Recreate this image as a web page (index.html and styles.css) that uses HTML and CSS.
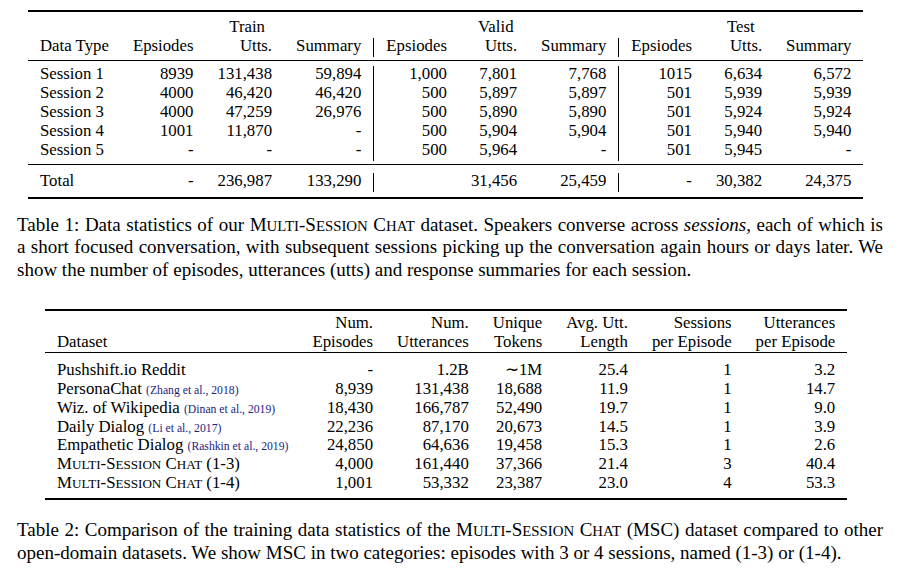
FILE: index.html
```html
<!DOCTYPE html>
<html>
<head>
<meta charset="utf-8">
<link rel="stylesheet" href="styles.css">
</head>
<body>
<div class="page">
  <table class="tab tab1">
    <tr class="rule thick"><td colspan="10"></td></tr>
    <tr class="gap g-t1"><td colspan="10"></td></tr>
    <tr>
      <td></td>
      <td colspan="3" class="c">Train</td>
      <td colspan="3" class="c">Valid</td>
      <td colspan="3" class="c">Test</td>
    </tr>
    <tr>
      <td class="l">Data Type</td>
      <td>Epsiodes</td><td>Utts.</td><td>Summary</td>
      <td class="bl">Epsiodes</td><td>Utts.</td><td>Summary</td>
      <td class="bl">Epsiodes</td><td>Utts.</td><td>Summary</td>
    </tr>
    <tr class="gap g-a"><td colspan="10"></td></tr>
    <tr class="rule"><td colspan="10"></td></tr>
    <tr class="gap g-b"><td colspan="10"></td></tr>
    <tr>
      <td class="l">Session 1</td>
      <td>8939</td><td>131,438</td><td>59,894</td>
      <td class="bl">1,000</td><td>7,801</td><td>7,768</td>
      <td class="bl">1015</td><td>6,634</td><td>6,572</td>
    </tr>
    <tr>
      <td class="l">Session 2</td>
      <td>4000</td><td>46,420</td><td>46,420</td>
      <td class="bl">500</td><td>5,897</td><td>5,897</td>
      <td class="bl">501</td><td>5,939</td><td>5,939</td>
    </tr>
    <tr>
      <td class="l">Session 3</td>
      <td>4000</td><td>47,259</td><td>26,976</td>
      <td class="bl">500</td><td>5,890</td><td>5,890</td>
      <td class="bl">501</td><td>5,924</td><td>5,924</td>
    </tr>
    <tr>
      <td class="l">Session 4</td>
      <td>1001</td><td>11,870</td><td>-</td>
      <td class="bl">500</td><td>5,904</td><td>5,904</td>
      <td class="bl">501</td><td>5,940</td><td>5,940</td>
    </tr>
    <tr>
      <td class="l">Session 5</td>
      <td>-</td><td>-</td><td>-</td>
      <td class="bl">500</td><td>5,964</td><td>-</td>
      <td class="bl">501</td><td>5,945</td><td>-</td>
    </tr>
    <tr class="gap g-c"><td colspan="10"></td></tr>
    <tr class="rule"><td colspan="10"></td></tr>
    <tr class="gap g-d"><td colspan="10"></td></tr>
    <tr>
      <td class="l">Total</td>
      <td>-</td><td>236,987</td><td>133,290</td>
      <td class="bl"></td><td>31,456</td><td>25,459</td>
      <td class="bl">-</td><td>30,382</td><td>24,375</td>
    </tr>
    <tr class="gap g-e"><td colspan="10"></td></tr>
    <tr class="rule thick"><td colspan="10"></td></tr>
  </table>

  <p class="caption cap1">
    <span class="ln">Table 1: Data statistics of our <span class="sc">M<span class="s">ULTI</span>-S<span class="s">ESSION</span> C<span class="s">HAT</span></span> dataset. Speakers converse across <i>sessions</i>, each of which is</span>
    <span class="ln">a short focused conversation, with subsequent sessions picking up the conversation again hours or days later. We</span>
    <span class="ln end">show the number of episodes, utterances (utts) and response summaries for each session.</span>
  </p>

  <table class="tab tab2">
    <tr class="rule thick"><td colspan="7"></td></tr>
    <tr class="gap g-f"><td colspan="7"></td></tr>
    <tr class="head">
      <td class="l">Dataset</td>
      <td>Num.<br>Episodes</td>
      <td>Num.<br>Utterances</td>
      <td>Unique<br>Tokens</td>
      <td>Avg. Utt.<br>Length</td>
      <td>Sessions<br>per Episode</td>
      <td>Utterances<br>per Episode</td>
    </tr>
    <tr class="gap g-g"><td colspan="7"></td></tr>
    <tr class="rule"><td colspan="7"></td></tr>
    <tr class="gap g-h"><td colspan="7"></td></tr>
    <tr class="row">
      <td class="l">Pushshift.io Reddit</td>
      <td>-</td><td>1.2B</td><td>&#8764;1M</td><td>25.4</td><td>1</td><td>3.2</td>
    </tr>
    <tr class="row">
      <td class="l">PersonaChat <span class="cite">(Zhang et al., 2018)</span></td>
      <td>8,939</td><td>131,438</td><td>18,688</td><td>11.9</td><td>1</td><td>14.7</td>
    </tr>
    <tr class="row">
      <td class="l">Wiz. of Wikipedia <span class="cite">(Dinan et al., 2019)</span></td>
      <td>18,430</td><td>166,787</td><td>52,490</td><td>19.7</td><td>1</td><td>9.0</td>
    </tr>
    <tr class="row">
      <td class="l">Daily Dialog <span class="cite">(Li et al., 2017)</span></td>
      <td>22,236</td><td>87,170</td><td>20,673</td><td>14.5</td><td>1</td><td>3.9</td>
    </tr>
    <tr class="row">
      <td class="l">Empathetic Dialog <span class="cite">(Rashkin et al., 2019)</span></td>
      <td>24,850</td><td>64,636</td><td>19,458</td><td>15.3</td><td>1</td><td>2.6</td>
    </tr>
    <tr class="row">
      <td class="l"><span class="sc">M<span class="s">ULTI</span>-S<span class="s">ESSION</span> C<span class="s">HAT</span></span> (1-3)</td>
      <td>4,000</td><td>161,440</td><td>37,366</td><td>21.4</td><td>3</td><td>40.4</td>
    </tr>
    <tr class="row">
      <td class="l"><span class="sc">M<span class="s">ULTI</span>-S<span class="s">ESSION</span> C<span class="s">HAT</span></span> (1-4)</td>
      <td>1,001</td><td>53,332</td><td>23,387</td><td>23.0</td><td>4</td><td>53.3</td>
    </tr>
    <tr class="gap g-i"><td colspan="7"></td></tr>
    <tr class="rule thick"><td colspan="7"></td></tr>
  </table>

  <p class="caption cap2">
    <span class="ln">Table 2: Comparison of the training data statistics of the <span class="sc">M<span class="s">ULTI</span>-S<span class="s">ESSION</span> C<span class="s">HAT</span></span> (MSC) dataset compared to other</span>
    <span class="ln end">open-domain datasets. We show MSC in two categories: episodes with 3 or 4 sessions, named (1-3) or (1-4).</span>
  </p>
</div>
</body>
</html>
```

FILE: styles.css
```css
html, body {
  margin: 0;
  padding: 0;
  background: #fff;
}

body {
  font-family: "Liberation Serif", "Times New Roman", serif;
  color: #000;
}

.page {
  padding: 10px 0 0 17px;
}

.tab {
  border-collapse: separate;
  border-spacing: 0;
  font-size: 16.8px;
}

.tab1 {
  margin-left: 11px;
}

.tab2 {
  margin-left: 28px;
  margin-top: 27px;
}

.tab td {
  padding: 0 12px 3.7px;
  line-height: 15.3px;
  text-align: right;
  white-space: nowrap;
  vertical-align: top;
}

.tab td.l {
  text-align: left;
}

.tab td.c {
  text-align: center;
}

.tab td.bl {
  border-left: 1px solid #000;
}

.tab tr.gap td,
.tab tr.rule td {
  padding: 0;
  line-height: 0;
  font-size: 0;
}

.tab tr.rule td {
  height: 0;
  border-top: 1px solid #000;
}

.tab tr.rule.thick td {
  border-top-width: 2px;
}

.g-t1 td { height: 6.7px; }
.g-a td { height: 3.3px; }
.g-b td { height: 5px; }
.g-c td { height: 3px; }
.g-d td { height: 7.7px; }
.g-e td { height: 5.3px; }
.g-f td { height: 2.4px; }
.g-g td { height: 0.6px; }
.g-h td { height: 8.6px; }
.g-i td { height: 5.15px; }

.tab2 tr.head td {
  line-height: 19px;
  padding-bottom: 0;
  vertical-align: bottom;
}

.tab2 tr.row td {
  line-height: 18.75px;
  padding-bottom: 0;
}

.cite {
  font-size: 11.7px;
  line-height: 0;
  color: #24247f;
}

.sc .s {
  font-size: 0.78em;
  line-height: 0;
}

.caption {
  width: 866px;
  margin: 0;
  font-size: 19px;
  line-height: 22.7px;
}

.cap1 {
  margin-top: 14.9px;
}

.cap2 {
  margin-top: 19.5px;
}

.ln {
  display: block;
  text-align: justify;
  text-align-last: justify;
  white-space: nowrap;
}

.ln.end {
  text-align-last: left;
}
```
